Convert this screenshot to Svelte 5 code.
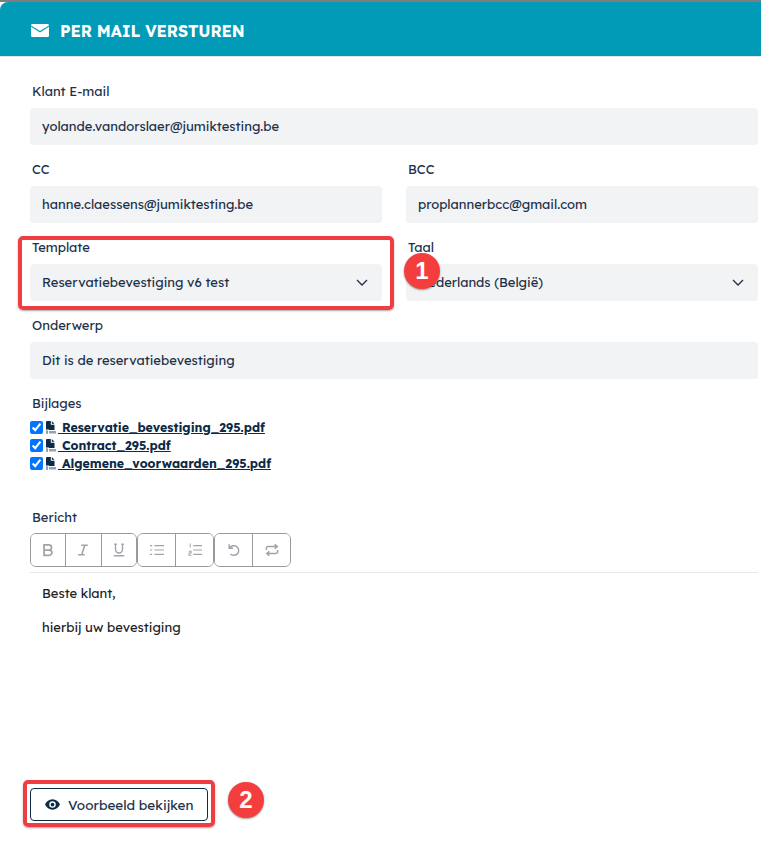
<script>
  const attachments = ['Reservatie_bevestiging_295.pdf', 'Contract_295.pdf', 'Algemene_voorwaarden_295.pdf'];
</script>

<div class="page">
  <div class="dialog">
    <header class="head">
      <svg class="mail" viewBox="0 0 18 13" width="18" height="13" aria-hidden="true">
        <path d="M1.500 0h15A1.500 1.500 0 0 1 18 1.400L9 7 0 1.400A1.500 1.500 0 0 1 1.500 0z" fill="#fff"/>
        <path d="M0 2.800l9 5.600 9-5.600v8.700a1.500 1.500 0 0 1-1.500 1.500h-15A1.500 1.500 0 0 1 0 11.500z" fill="#fff"/>
      </svg>
      <h1>PER MAIL VERSTUREN</h1>
    </header>

    <div class="form">
      <div class="field">
        <span class="label">Klant E-mail</span>
        <div class="input">yolande.vandorslaer@jumiktesting.be</div>
      </div>
      <div class="two">
        <div class="field">
          <span class="label">CC</span>
          <div class="input">hanne.claessens@jumiktesting.be</div>
        </div>
        <div class="field">
          <span class="label">BCC</span>
          <div class="input">proplannerbcc@gmail.com</div>
        </div>
      </div>
      <div class="two">
        <div class="field">
          <span class="label">Template</span>
          <div class="input select">
            Reservatiebevestiging v6 test
            <svg viewBox="0 0 12 7" width="12" height="7" aria-hidden="true"><path d="M1 1l5 5 5-5" fill="none" stroke="#1f3147" stroke-width="1.300"/></svg>
          </div>
        </div>
        <div class="field">
          <span class="label">Taal</span>
          <div class="input select">
            Nederlands (België)
            <svg viewBox="0 0 12 7" width="12" height="7" aria-hidden="true"><path d="M1 1l5 5 5-5" fill="none" stroke="#1f3147" stroke-width="1.300"/></svg>
          </div>
        </div>
      </div>
      <div class="field">
        <span class="label">Onderwerp</span>
        <div class="input">Dit is de reservatiebevestiging</div>
      </div>

      <div class="attachments">
        <span class="label">Bijlages</span>
        <ul>
          {#each attachments as file}
            <li>
              <input type="checkbox" checked />
              <a href="#top">
                <svg viewBox="0 0 10 13" width="10" height="13" aria-hidden="true">
                  <path d="M0 1a1 1 0 0 1 1-1h3.800v3.800H8.500V9H3v-.500H0z" fill="#0d2a47"/>
                  <path d="M5.800 0L8.500 2.800H5.800z" fill="#0d2a47"/>
                  <path d="M0 9.300h2v3.700H1a1 1 0 0 1-1-1zM3 10h7v2.500H3z" fill="#98a2ad"/>
                </svg>
                <span class="fname">&nbsp;{file}</span>
              </a>
            </li>
          {/each}
        </ul>
      </div>

      <div class="message">
        <span class="label">Bericht</span>
        <div class="toolbar">
          <div class="group g1">
            <button aria-label="Vet"><svg viewBox="0 0 16 16"><path d="M3.500 2h5.500a3 3 0 0 1 0 6H3.500zM3.500 8h6a3 3 0 0 1 0 6h-6z" fill="none" stroke="#a0a4a9" stroke-width="2"/></svg></button>
            <button aria-label="Cursief"><svg viewBox="0 0 16 16"><path d="M6 2.500h7.500M2.500 13.500h7.500M10 2.500l-3.500 11" fill="none" stroke="#a0a4a9" stroke-width="1.800"/></svg></button>
            <button aria-label="Onderstreept"><svg viewBox="0 0 16 16"><path d="M4 1.500v6a4 4 0 0 0 8 0v-6M2.500 1.500h3M10.500 1.500h3M2 14.500h12" fill="none" stroke="#a0a4a9" stroke-width="1.600"/></svg></button>
          </div>
          <div class="group g2">
            <button aria-label="Lijst"><svg viewBox="0 0 16 16"><path d="M5 3h11M5 8h11M5 13h11M0 3h2.500M0 8h2.500M0 13h2.500" fill="none" stroke="#a0a4a9" stroke-width="1.400"/></svg></button>
            <button aria-label="Genummerde lijst"><svg viewBox="0 0 16 16"><path d="M6 3h10M6 8h10M6 13h10M2.500 .5v4.500M1 9.500h2.500v2H1.200v2.500H4" fill="none" stroke="#a0a4a9" stroke-width="1.200"/></svg></button>
          </div>
          <div class="group g3">
            <button aria-label="Ongedaan maken"><svg viewBox="0 0 16 16"><path d="M2.500 1.500v4.500H7M3 6a5.500 5.500 0 1 1 1 6.500" fill="none" stroke="#a0a4a9" stroke-width="1.700"/></svg></button>
            <button aria-label="Opnieuw"><svg viewBox="0 0 16 16"><path d="M1.500 8V6a2 2 0 0 1 2-2h10M11 1.500L14 4l-3 2.500M14.500 8v2a2 2 0 0 1-2 2h-10M5 9.500L2 12l3 2.500" fill="none" stroke="#a0a4a9" stroke-width="1.700"/></svg></button>
          </div>
        </div>
        <div class="editor">
          <p>Beste klant,</p>
          <p>hierbij uw bevestiging</p>
        </div>
      </div>

      <button class="preview">
        <svg viewBox="0 0 16 11" width="15" height="11" aria-hidden="true">
          <path fill-rule="evenodd" d="M8 0c3.500 0 6.400 2.300 8 5.500C14.400 8.700 11.500 11 8 11S1.600 8.700 0 5.500C1.600 2.300 4.500 0 8 0zm0 2a3.500 3.500 0 1 0 0 7 3.500 3.500 0 0 0 0-7zm0 1.500a2 2 0 1 1 0 4 2 2 0 0 1 0-4z" fill="#0d2a47"/>
        </svg>
        Voorbeeld bekijken
      </button>
    </div>
  </div>

  <div class="mark box1"></div>
  <div class="mark box2"></div>
  <div class="badge b1">1</div>
  <div class="badge b2">2</div>
</div>

<style>
  :global(body) { margin: 0; background: #fff; }
  .page {
    position: relative;
    width: 761px;
    height: 849px;
    overflow: hidden;
    background: #fff;
    font-family: Lexend, "Inter", "Liberation Sans", sans-serif;
    color: #1c3149;
    font-size: 13px;
  }
  .dialog { border-top: 2px solid #7d7d7d; }
  .head {
    height: 55px;
    box-sizing: border-box;
    background: #019bb8;
    border-top-left-radius: 8px;
    display: flex;
    align-items: center;
    gap: 11px;
    padding: 3px 0 0 31px;
    border-bottom: 1px solid #e3e5e8;
  }
  .mail { flex: none; }
  h1 {
    margin: 0;
    color: #fff;
    font-size: 16px;
    font-weight: 700;
    letter-spacing: -0.1px;
  }
  .form { padding: 26px 3px 0 30px; }
  .field { display: flex; flex-direction: column; margin-bottom: 16px; }
  .label { font-size: 13px; line-height: 16px; margin: 0 0 9px 2px; color: #1c3149; font-weight: 400; }
  .input {
    height: 37px;
    box-sizing: border-box;
    padding: 0 12px 1px;
    background: #f2f3f5;
    border-radius: 4px;
    display: flex;
    align-items: center;
    justify-content: space-between;
    font-size: 13px;
  }
  .select { padding-right: 14px; }
  .two { display: grid; grid-template-columns: 352px 352px; column-gap: 24px; }
  .attachments { margin-top: 1px; }
  .attachments .label { display: block; margin-bottom: 7px; }
  ul { list-style: none; margin: 0; padding: 0; }
  li { height: 18px; display: flex; align-items: center; }
  input[type="checkbox"] { width: 13px; height: 13px; margin: 0 3px 0 0; accent-color: #0075ff; }
  a {
    display: inline-flex;
    align-items: center;
    gap: 2px;
    color: #0d2a47;
    font-weight: 700;
    font-size: 12.400px;
    text-decoration: underline;
  }
  .fname { white-space: pre; }
  .message { margin-top: 37px; }
  .message .label { display: block; margin-bottom: 8px; }
  .toolbar { display: flex; }
  .group { display: flex; border: 1px solid #9a9a9a; border-radius: 6px; overflow: hidden; height: 34px; box-sizing: border-box; }
  .g1 { width: 107px; }
  .g2 { width: 77px; }
  .g3 { width: 77px; }
  .group button {
    flex: 1;
    padding: 0;
    border: 0;
    border-right: 1px solid #9a9a9a;
    background: #fff;
    display: flex;
    align-items: center;
    justify-content: center;
  }
  .group button:last-child { border-right: 0; }
  .group button svg { width: 14px; height: 14px; }
  .editor {
    margin-top: 5px;
    border-top: 1px solid #e8e9eb;
    padding: 12px 12px 0;
    height: 216px;
    box-sizing: border-box;
    color: #222;
  }
  p { margin: 0 0 18px; line-height: 16px; font-size: 13px; }
  .preview {
    display: flex;
    align-items: center;
    gap: 8px;
    width: 178px;
    height: 33px;
    padding: 0 0 0 14px;
    box-sizing: border-box;
    background: #fff;
    border: 1px solid #0d2a47;
    border-radius: 4px;
    font: inherit;
    font-weight: 400;
    font-size: 13.500px;
    color: #1c3149;
    white-space: nowrap;
  }
  .mark {
    position: absolute;
    box-sizing: border-box;
    border: 4px solid #ef3e42;
    border-radius: 5px;
    box-shadow: 0 1px 2px rgba(0,0,0,.35);
  }
  .box1 { left: 18px; top: 236px; width: 376px; height: 74px; }
  .box2 { left: 23px; top: 780px; width: 192px; height: 47px; }
  .badge {
    position: absolute;
    width: 36px;
    height: 36px;
    border-radius: 50%;
    background: #f43e3e;
    color: #fff;
    font: 700 24px/36px "Liberation Sans", sans-serif;
    text-align: center;
    box-shadow: 0 1px 2px rgba(0,0,0,.4);
  }
  .b1 { left: 404px; top: 253px; }
  .b2 { left: 228px; top: 782px; }
</style>
